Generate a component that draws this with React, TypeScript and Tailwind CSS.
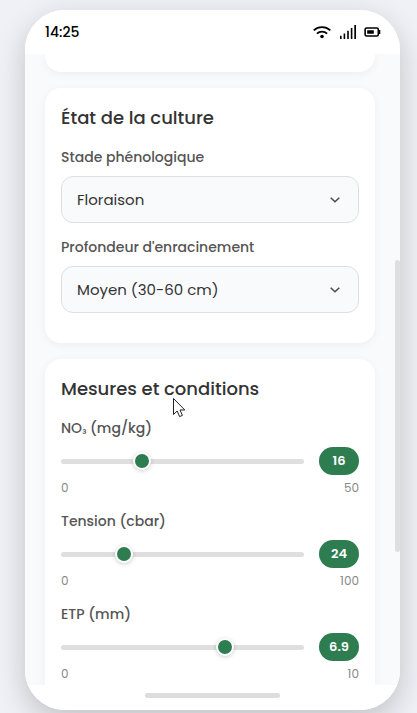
import type { ReactNode } from "react";

const measures = [
  {
    label: (
      <>
        NO<span className="relative -top-px font-['Inter'] text-[10px] leading-none tracking-[-0.3px]">₃</span> (mg/kg)
      </>
    ),
    id: "no3",
    value: 16,
    max: 50,
  },
  { label: "Tension (cbar)", id: "tension", value: 24, max: 100 },
  { label: "ETP (mm)", id: "etp", value: 6.9, max: 10 },
];

function StatusBar() {
  return (
    <header className="flex h-11 shrink-0 items-center justify-between bg-white pr-[19px] pl-5 text-black">
      <span className="text-sm font-medium">14:25</span>
      <div className="flex items-center gap-2">
        <svg width="18" height="14" viewBox="0 0 18 14" fill="none" stroke="currentColor" strokeWidth="1.8">
          <path d="M.7 5.3a12.2 12.2 0 0 1 16.6 0M3.9 8.6a7.4 7.4 0 0 1 10.2 0" />
          <circle cx="9" cy="11.5" r="1.8" fill="currentColor" stroke="none" />
        </svg>
        <svg className="ml-px" width="16" height="14" viewBox="0 0 16 14" fill="currentColor">
          <path d="M0 10.8h1.6V14H0zM3.6 8.5h1.6V14H3.6zM7.2 5.8h1.6V14H7.2zM10.8 3h1.6v11h-1.6zM14.3 0H16v14h-1.7z" />
        </svg>
        <svg width="17" height="10" viewBox="0 0 17 10" fill="currentColor">
          <rect x="1.1" y="1" width="13.2" height="8" rx="1.5" fill="none" stroke="currentColor" strokeWidth="1.6" />
          <path d="M3.2 3.2h6.6v3.6H3.2zM15 3h1.3v4H15z" />
        </svg>
      </div>
    </header>
  );
}

function Card({ title, children }: { title: string; children: ReactNode }) {
  return (
    <section className="shrink-0 rounded-2xl bg-white p-4 shadow-[0_2px_10px_rgba(0,0,0,0.05)]">
      <h2 className="mb-4 text-lg leading-[27px] font-medium whitespace-nowrap text-[#333]">{title}</h2>
      {children}
    </section>
  );
}

function SelectField({ label, value }: { label: string; value: string }) {
  return (
    <div className="mb-3.5">
      <div className="mb-2 text-sm leading-[21px] font-medium whitespace-nowrap text-[#555]">{label}</div>
      <div className="flex h-[47px] items-center justify-between rounded-xl border border-[#dcdfe8] bg-[#f9fafc] pr-[18px] pl-[15px]">
        <span className="pt-0.5 text-[15px] whitespace-nowrap text-[#333]">{value}</span>
        <svg width="10" height="6" viewBox="0 0 10 6" fill="none" stroke="#4a4a4a" strokeWidth="1.5">
          <path d="m.7.7 4.3 4.1L9.3.7" />
        </svg>
      </div>
    </div>
  );
}

function Gauge({ label, value, max }: { label: ReactNode; value: number; max: number }) {
  return (
    <div className="mb-3.5">
      <div className="mb-2 h-[21px] text-sm leading-[21px] font-medium whitespace-nowrap text-[#555]">{label}</div>
      <div className="flex h-7 items-center gap-[15px]">
        <div className="relative h-[5px] flex-1 rounded-full bg-[#dfdfdf]">
          <div
            className="absolute -top-[7px] size-[18px] rounded-full border-2 border-white bg-[#2e7d50] shadow-[0_1px_4px_rgba(0,0,0,0.2)]"
            style={{ left: (value / max) * 225 }}
          />
        </div>
        <div className="flex h-7 w-10 items-center justify-center rounded-[14px] bg-[#2e7d50] text-[13px] leading-7 font-semibold text-white">{value}</div>
      </div>
      <div className="mt-1 flex justify-between text-xs leading-[18px] text-[#888]">
        <span>0</span>
        <span>{max}</span>
      </div>
    </div>
  );
}

export default function App() {
  return (
    <div className="relative h-[713px] w-[417px] overflow-hidden bg-[#f0f1f6] px-[25px] pt-2.5 font-['Poppins','Inter',sans-serif]">
      <div className="h-[700px] w-[375px] rounded-[40px] shadow-[0_10px_30px_rgba(0,0,0,0.2)]">
        <div className="flex h-full flex-col overflow-hidden rounded-[40px] bg-white">
          <StatusBar />
          <main className="flex min-h-0 flex-1 overflow-hidden bg-[#f9fafc]">
            <div className="flex flex-1 flex-col gap-4 px-5">
              <div className="h-[18px] shrink-0 rounded-b-2xl bg-white shadow-[0_2px_10px_rgba(0,0,0,0.05)]" />
              <Card title="État de la culture">
                <SelectField label="Stade phénologique" value="Floraison" />
                <SelectField label="Profondeur d'enracinement" value="Moyen (30-60 cm)" />
              </Card>
              <Card title="Mesures et conditions">
                {measures.map((m) => (
                  <Gauge key={m.id} label={m.label} value={m.value} max={m.max} />
                ))}
              </Card>
            </div>
            <div className="w-[5px] shrink-0 pt-[206px]">
              <div className="h-[292px] rounded-full bg-[#dfdfdf]" />
            </div>
          </main>
          <footer className="flex h-[25px] shrink-0 justify-center bg-white pt-2">
            <div className="h-[5px] w-[135px] rounded-full bg-[#dddddd]" />
          </footer>
        </div>
      </div>
      <svg className="absolute top-[397px] left-[172px]" width="14" height="21" viewBox="0 0 14 21">
        <path d="M1.5 1.5v16l3.7-3.5 2.4 5.6 2.8-1.2-2.4-5.4h4.8z" fill="white" stroke="#222" strokeWidth="1" />
      </svg>
    </div>
  );
}
